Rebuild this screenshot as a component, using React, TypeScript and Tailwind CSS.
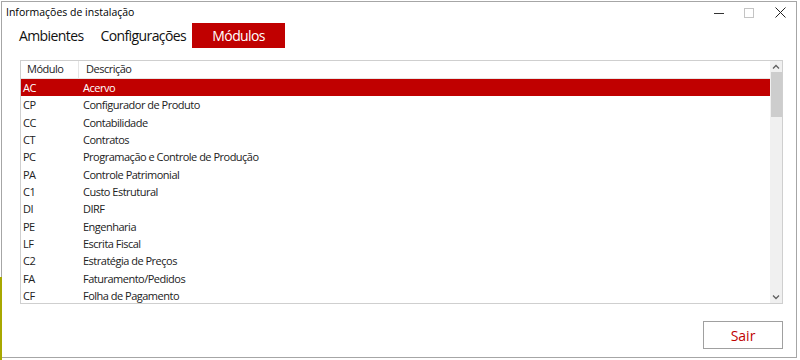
const RED = "#c00000"

const rows: [string, string][] = [
  ["AC", "Acervo"],
  ["CP", "Configurador de Produto"],
  ["CC", "Contabilidade"],
  ["CT", "Contratos"],
  ["PC", "Programação e Controle de Produção"],
  ["PA", "Controle Patrimonial"],
  ["C1", "Custo Estrutural"],
  ["DI", "DIRF"],
  ["PE", "Engenharia"],
  ["LF", "Escrita Fiscal"],
  ["C2", "Estratégia de Preços"],
  ["FA", "Faturamento/Pedidos"],
  ["CF", "Folha de Pagamento"],
]

function Chevron({ up }: { up?: boolean }) {
  return (
    <svg width="8" height="6" viewBox="0 0 8 6" className={up ? "" : "rotate-180"}>
      <path d="M1 4.5L4 1.5L7 4.5" fill="none" stroke="#606060" strokeWidth="1.3" />
    </svg>
  )
}

export default function App() {
  return (
    <div className="relative w-[800px] h-[360px] bg-white overflow-hidden" style={{ fontFamily: "'Open Sans', 'Noto Sans', sans-serif" }}>
      {/* olive strip peeking from behind */}
      <div className="absolute left-0 top-[277px] w-[2px] h-[83px] bg-[#a8a800]" />

      <div className="ml-[1px] mt-[1px] w-[796px] h-[357px] border border-[#a6a6a6] flex flex-col">
        {/* title bar */}
        <div className="h-[21px] flex items-center pl-[4px] pr-[10px]">
          <span className="text-[10.5px] text-black">Informações de instalação</span>
          <div className="ml-auto flex items-center">
            <svg width="10" height="10" viewBox="0 0 10 10" className="mr-[20px]"><path d="M0 5.5H10" stroke="#333" strokeWidth="1" /></svg>
            <svg width="10" height="10" viewBox="0 0 10 10" className="mr-[21px]"><rect x="0.5" y="0.5" width="9" height="9" fill="none" stroke="#c4c4c4" /></svg>
            <svg width="11" height="11" viewBox="0 0 11 11"><path d="M0.5 0.5L10.5 10.5M10.5 0.5L0.5 10.5" stroke="#222" strokeWidth="1" /></svg>
          </div>
        </div>

        {/* tabs */}
        <div className="h-[25px] flex items-stretch pl-[17px] text-[14px] tracking-[-0.6px]">
          <div className="flex items-center pr-[17px] text-[#111]">Ambientes</div>
          <div className="flex items-center pr-[6px] text-[#111]">Configurações</div>
          <div className="flex items-center justify-center w-[93px] text-white" style={{ background: RED }}>Módulos</div>
        </div>

        {/* list */}
        <div className="mt-[12px] ml-[18px] w-[763px] h-[244px] border border-[#cfcfcf] flex">
          <div className="flex-1 flex flex-col text-[11px] text-[#222] tracking-[-0.5px]">
            <div className="h-[18px] flex items-center border-b border-[#e5e5e5]">
              <div className="w-[58px] h-full flex items-center pl-[6px] border-r border-[#e5e5e5]">Módulo</div>
              <div className="pl-[7px]">Descrição</div>
            </div>
            {rows.map(([code, desc], i) => (
              <div
                key={code}
                className={"h-[17.33px] flex items-center pt-[2px] " + (i === 0 ? "text-white" : "")}
                style={i === 0 ? { background: RED } : undefined}
              >
                <div className="w-[62px] pl-[2px]">{code}</div>
                <div>{desc}</div>
              </div>
            ))}
          </div>
          {/* scrollbar */}
          <div className="w-[12px] bg-[#f0f0f0] flex flex-col items-center">
            <div className="h-[11px] flex items-center"><Chevron up /></div>
            <div className="w-[11px] h-[45px] bg-[#cdcdcd]" />
            <div className="flex-1" />
            <div className="h-[12px] flex items-center"><Chevron /></div>
          </div>
        </div>

        {/* footer */}
        <div className="flex-1 flex items-start justify-end pr-[13px] pt-[17px]">
          <button className="w-[80px] h-[28px] border border-[#a0a0a0] bg-white text-[14px]" style={{ color: RED }}>Sair</button>
        </div>
      </div>
    </div>
  )
}
